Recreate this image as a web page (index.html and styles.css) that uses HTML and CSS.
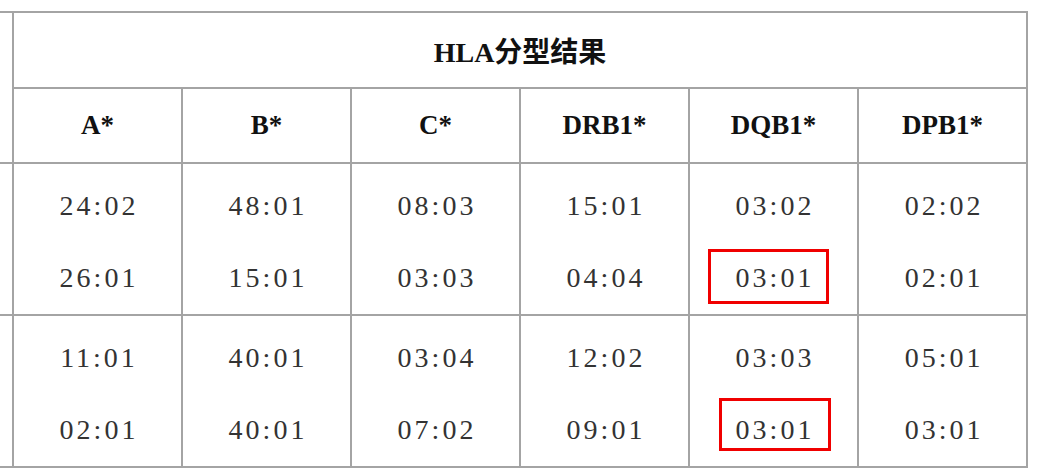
FILE: index.html
```html
<!DOCTYPE html>
<html lang="zh-CN">
<head>
<meta charset="utf-8">
<title>HLA分型结果</title>
<link rel="stylesheet" href="styles.css">
</head>
<body>
<table class="hla">
  <colgroup>
    <col class="c0">
    <col class="c"><col class="c"><col class="c"><col class="c"><col class="c"><col class="c">
  </colgroup>
  <tr class="r-title">
    <td class="stub" rowspan="2"></td>
    <th colspan="6">HLA分型结果</th>
  </tr>
  <tr class="r-head">
    <th>A*</th><th>B*</th><th>C*</th><th>DRB1*</th><th>DQB1*</th><th>DPB1*</th>
  </tr>
  <tr class="r-data">
    <td class="stub"></td>
    <td><div class="v">24:02</div><div class="v">26:01</div></td>
    <td><div class="v">48:01</div><div class="v">15:01</div></td>
    <td><div class="v">08:03</div><div class="v">03:03</div></td>
    <td><div class="v">15:01</div><div class="v">04:04</div></td>
    <td><div class="v">03:02</div><div class="v"><span class="mark mark-1">03:01</span></div></td>
    <td><div class="v">02:02</div><div class="v">02:01</div></td>
  </tr>
  <tr class="r-data">
    <td class="stub"></td>
    <td><div class="v">11:01</div><div class="v">02:01</div></td>
    <td><div class="v">40:01</div><div class="v">40:01</div></td>
    <td><div class="v">03:04</div><div class="v">07:02</div></td>
    <td><div class="v">12:02</div><div class="v">09:01</div></td>
    <td><div class="v">03:03</div><div class="v"><span class="mark mark-2">03:01</span></div></td>
    <td><div class="v">05:01</div><div class="v">03:01</div></td>
  </tr>
</table>
</body>
</html>
```

FILE: styles.css
```css
html, body {
  margin: 0;
  background: #ffffff;
}

.hla {
  border-collapse: collapse;
  table-layout: fixed;
  width: 1028px;
  margin-top: 11px;
  font-family: "Liberation Serif", "Noto Sans CJK SC", serif;
}

.hla col.c0 { width: 13px; }
.hla col.c { width: 169px; }

.hla th,
.hla td {
  border: 2px solid #a4a4a4;
  padding: 0;
  text-align: center;
}

.hla .stub {
  border-left: none;
}

.hla th {
  font-weight: bold;
  font-size: 27px;
  color: #111111;
  vertical-align: middle;
}

.r-title th {
  height: 74px;
  font-size: 28px;
}

.r-head th {
  height: 73px;
}

.r-data td {
  vertical-align: top;
  padding-top: 6px;
  height: 144px;
}

.v {
  font-size: 28px;
  line-height: 72px;
  color: #333333;
  letter-spacing: 3px;
  padding-left: 3px;
}

.mark {
  position: relative;
}

.mark::after {
  content: "";
  position: absolute;
  border: 3px solid #f00000;
}

.mark-1::after {
  left: -28px;
  right: -15px;
  top: -13px;
  bottom: -11px;
}

.mark-2::after {
  left: -17px;
  right: -17px;
  top: -16px;
  bottom: -6px;
}
```
